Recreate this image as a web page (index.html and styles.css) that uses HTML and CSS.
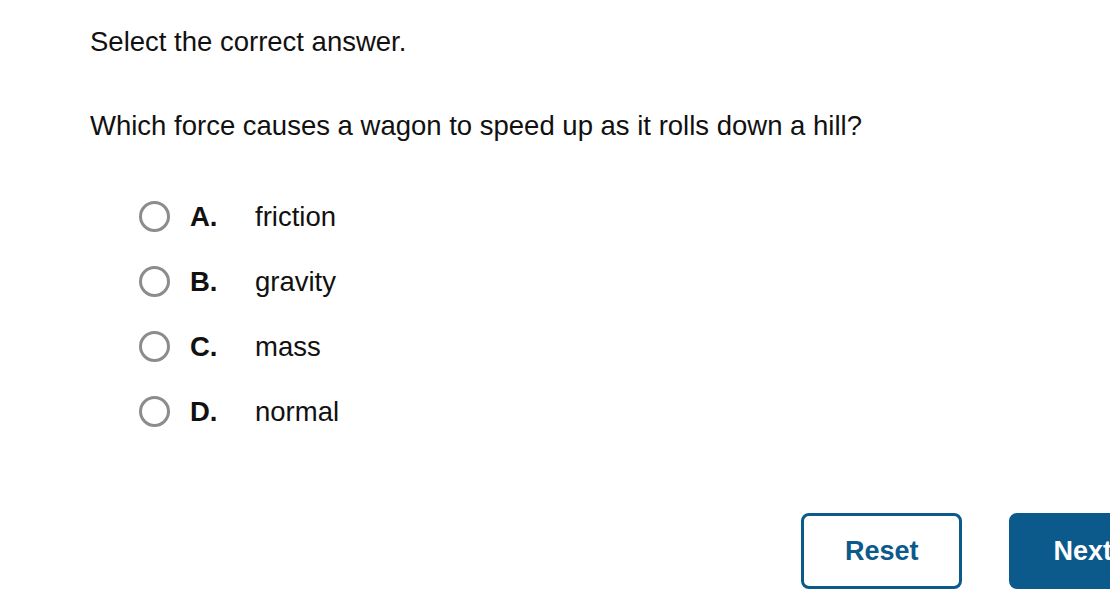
FILE: index.html
```html
<!DOCTYPE html>
<html lang="en">
<head>
    <meta charset="UTF-8">
    <title>Select the correct answer</title>
    <link rel="stylesheet" href="styles.css">
</head>
<body>
    <div class="page">
        <p class="prompt">Select the correct answer.</p>
        <p class="question">Which force causes a wagon to speed up as it rolls down a hill?</p>
        <ul class="choices">
            <li class="choice"><span class="radio"></span><b class="letter">A.</b><span>friction</span></li>
            <li class="choice"><span class="radio"></span><b class="letter">B.</b><span>gravity</span></li>
            <li class="choice"><span class="radio"></span><b class="letter">C.</b><span>mass</span></li>
            <li class="choice"><span class="radio"></span><b class="letter">D.</b><span>normal</span></li>
        </ul>
        <div class="actions">
            <button class="btn btn-outline">Reset</button>
            <button class="btn btn-solid">Next</button>
        </div>
    </div>
</body>
</html>
```

FILE: styles.css
```css
html, body {
    margin: 0;
    overflow: hidden;
    background: #fff;
}
body {
    font-family: 'Liberation Sans', Arial, Helvetica, sans-serif;
    font-size: 27.5px;
    color: #111;
}
.page {
    width: 1066px;
    padding: 26px 0 0 90px;
}
.prompt, .question {
    margin: 0;
    line-height: 32px;
}
.question {
    margin-top: 52px;
}
.choices {
    list-style: none;
    margin: 42px 0 0 0;
    padding: 0 0 0 49px;
}
.choice {
    display: flex;
    align-items: center;
    height: 65px;
}
.radio {
    width: 25px;
    height: 25px;
    border: 3px solid #8c8c8c;
    border-radius: 50%;
    margin-right: 20px;
    flex-shrink: 0;
}
.letter {
    width: 65px;
    font-weight: 700;
}
.actions {
    display: flex;
    justify-content: flex-end;
    gap: 47px;
    margin-top: 69px;
}
.btn {
    font-family: inherit;
    font-size: 27px;
    font-weight: 700;
    height: 76px;
    padding: 0 41px;
    border: 3px solid #0c5a8c;
    border-radius: 8px;
    cursor: pointer;
}
.btn-outline {
    background: #fff;
    color: #0c5a8c;
}
.btn-solid {
    background: #0c5a8c;
    color: #fff;
}
```
